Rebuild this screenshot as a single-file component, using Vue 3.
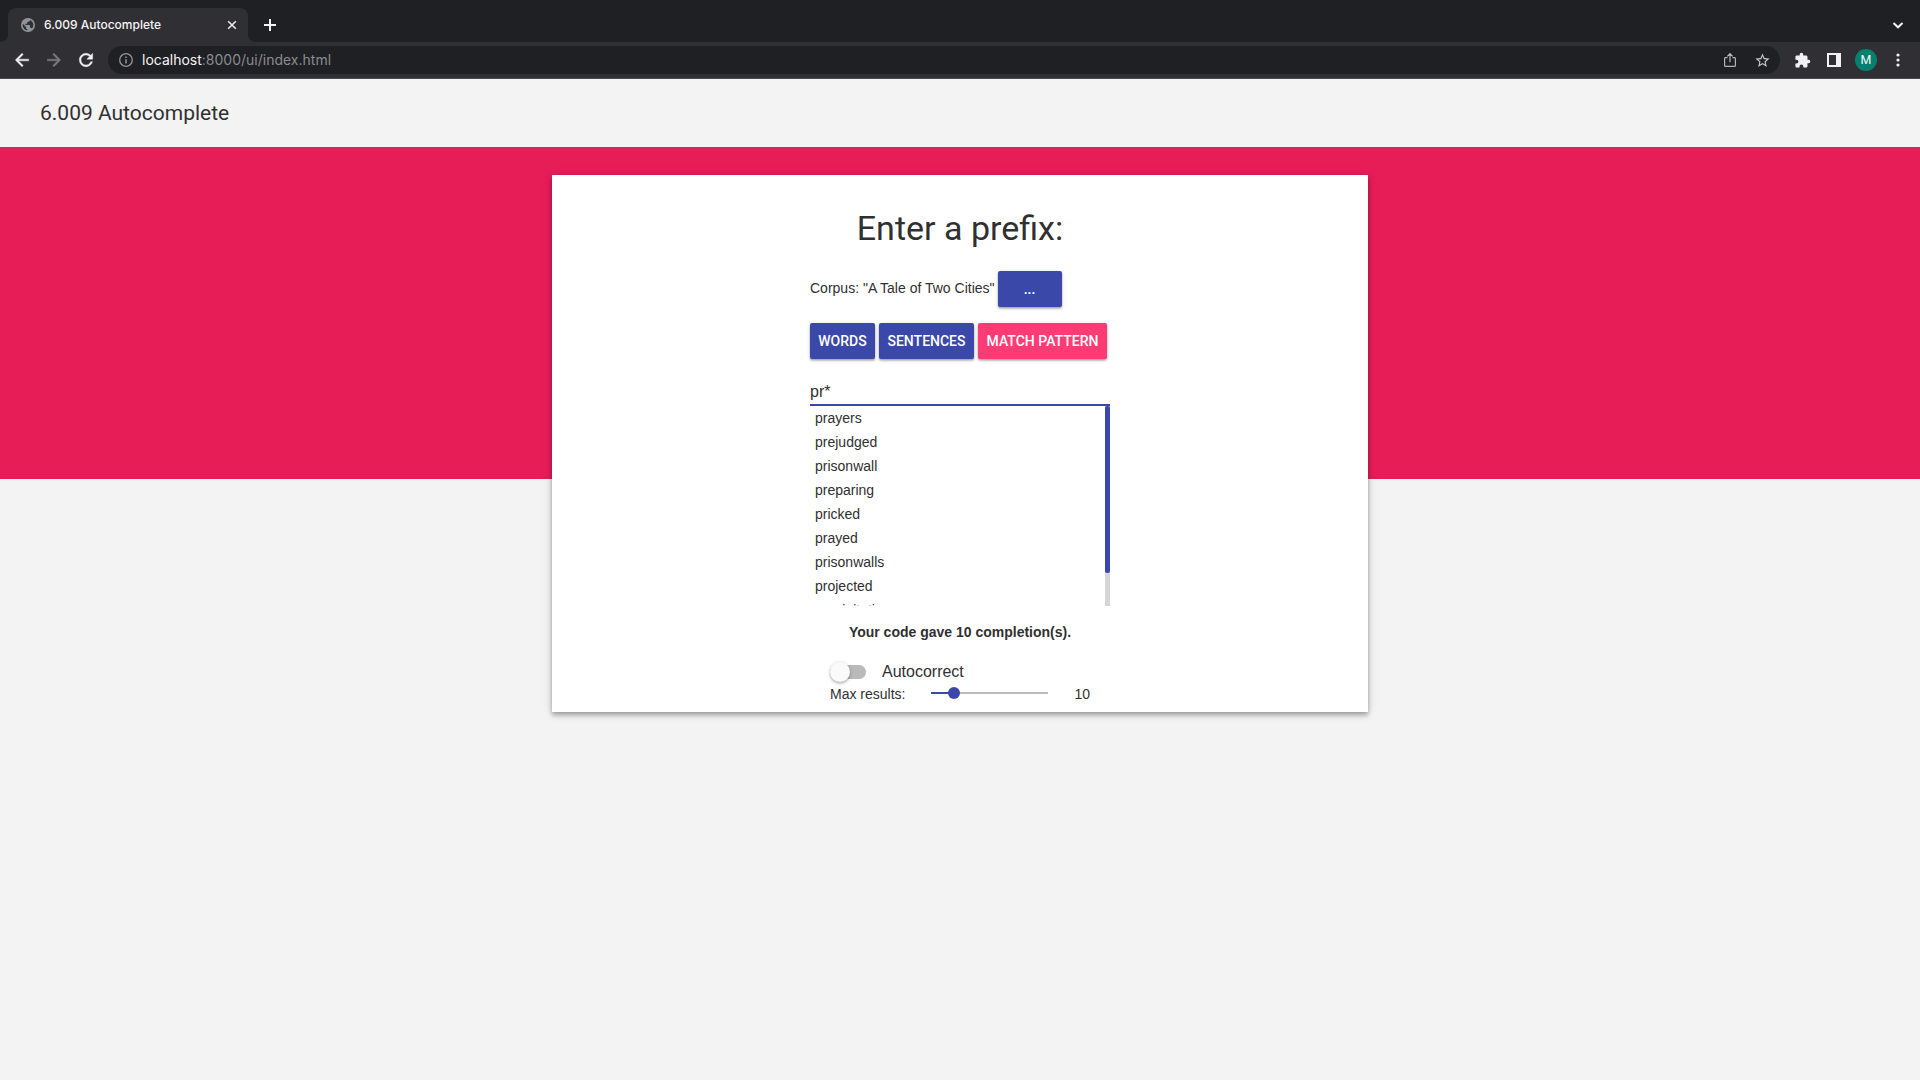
<script setup>
import { computed, ref } from 'vue'

const pattern = ref('pr*')
const autocorrect = ref(false)
const maxResults = ref(10)
const maxLimit = 50
const fill = computed(() => maxResults.value / maxLimit)
const results = [
  'prayers',
  'prejudged',
  'prisonwall',
  'preparing',
  'pricked',
  'prayed',
  'prisonwalls',
  'projected',
  'precipitation',
  'pretending',
]

// The list shows 200px of rows that are 24px tall; the thumb mirrors that ratio.
const viewHeight = 200
const contentHeight = results.length * 24
const scrollTop = ref(0)
const thumb = computed(() => ({
  height: `${Math.round((viewHeight * viewHeight) / contentHeight)}px`,
  marginTop: `${Math.round((scrollTop.value * viewHeight) / contentHeight)}px`,
}))
</script>

<template>
  <div class="window">
    <div class="tabstrip">
      <div class="tab">
        <svg class="favicon" viewBox="0 0 24 24" width="16" height="16" aria-hidden="true">
          <circle cx="12" cy="12" r="10.500" fill="#8f959b" />
          <path fill="#303034" d="M11 19.900v-1.900c-1.100 0-2-.9-2-2v-1L4.200 10.200c-.4 1.500-.3 3 .1 4.300C5.300 17.500 7.800 19.500 11 19.900zM17.900 17.400c-.3-.8-1-1.400-1.900-1.400h-1v-3c0-.6-.5-1-1-1H8v-2h2c.6 0 1-.4 1-1V7h2c1.100 0 2-.9 2-2v-.4c2.900 1.200 5 4.100 5 7.400 0 2.100-.8 4-2.100 5.400z" />
        </svg>
        <span class="tab-title">6.009 Autocomplete</span>
        <button class="icon" type="button" aria-label="Close tab">
          <svg viewBox="0 0 16 16" width="16" height="16"><path d="M4.200 4.200l7.600 7.600M11.800 4.200l-7.600 7.600" stroke="#eeeef0" stroke-width="1.500" /></svg>
        </button>
      </div>
      <button class="icon new-tab" type="button" aria-label="New tab">
        <svg viewBox="0 0 16 16" width="16" height="16"><path d="M8 2v12M2 8h12" stroke="#f4f4f5" stroke-width="2" /></svg>
      </button>
      <button class="icon tab-search" type="button" aria-label="Search tabs">
        <svg viewBox="0 0 16 16" width="16" height="16"><path d="M3.500 6L8 10.300 12.500 6" fill="none" stroke="#f4f4f5" stroke-width="2" /></svg>
      </button>
    </div>

    <div class="toolbar">
      <button class="icon" type="button" aria-label="Back">
        <svg viewBox="0 0 24 24" width="20" height="20"><path fill="#f1f1f3" stroke="#f1f1f3" stroke-width=".5" d="M20 11H7.830l5.590-5.590L12 4l-8 8 8 8 1.410-1.410L7.830 13H20v-2z" /></svg>
      </button>
      <button class="icon" type="button" aria-label="Forward">
        <svg viewBox="0 0 24 24" width="20" height="20"><path fill="#7b7b7f" stroke="#7b7b7f" stroke-width=".5" d="M12 4l-1.410 1.410L16.170 11H4v2h12.170l-5.580 5.590L12 20l8-8z" /></svg>
      </button>
      <button class="icon" type="button" aria-label="Reload">
        <svg viewBox="0 0 24 24" width="20" height="20"><path fill="#f1f1f3" stroke="#f1f1f3" stroke-width=".5" d="M17.650 6.350C16.200 4.900 14.210 4 12 4c-4.420 0-7.990 3.580-7.990 8s3.570 8 7.990 8c3.730 0 6.840-2.550 7.730-6h-2.080c-.82 2.330-3.040 4-5.650 4-3.310 0-6-2.690-6-6s2.690-6 6-6c1.660 0 3.140.69 4.220 1.780L13 11h7V4l-2.350 2.350z" /></svg>
      </button>
      <div class="omnibox">
        <svg viewBox="0 0 16 16" width="16" height="16" aria-hidden="true">
          <circle cx="8" cy="8" r="6.300" fill="none" stroke="#92979c" stroke-width="1.300" />
          <path d="M8 7.200v4.200M8 4.400v1.600" stroke="#92979c" stroke-width="1.500" />
        </svg>
        <span class="url"><b>localhost</b>:8000/ui/index.html</span>
        <button class="icon" type="button" aria-label="Share">
          <svg viewBox="0 0 16 16" width="16" height="16"><path d="M5.500 5.700H3.300a.7.7 0 0 0-.7.700v7a.9.9 0 0 0 .9.900h9a.9.9 0 0 0 .9-.9v-7a.7.7 0 0 0-.7-.7h-2.200M8 10.300V1.800M5.300 4.400L8 1.700l2.700 2.700" fill="none" stroke="#b3b3b7" stroke-width="1.200" /></svg>
        </button>
        <button class="icon" type="button" aria-label="Bookmark">
          <svg viewBox="0 0 24 24" width="17" height="17"><path fill="#c6c6c9" d="M22 9.240l-7.190-.62L12 2 9.190 8.630 2 9.240l5.460 4.730L5.820 21 12 17.270 18.180 21l-1.630-7.030L22 9.240zM12 15.400l-3.760 2.270 1-4.280-3.320-2.880 4.380-.38L12 6.100l1.710 4.040 4.380.38-3.320 2.880 1 4.280L12 15.400z" /></svg>
        </button>
      </div>
      <button class="icon" type="button" aria-label="Extensions">
        <svg viewBox="0 0 24 24" width="17" height="17"><path fill="#f1f1f3" d="M20.500 11H19V7c0-1.100-.9-2-2-2h-4V3.500a2.500 2.500 0 0 0-5 0V5H4c-1.100 0-2 .9-2 2v3.800h1.500a2.700 2.700 0 0 1 0 5.400H2V20c0 1.100.9 2 2 2h3.800v-1.500a2.700 2.700 0 0 1 5.400 0V22H17c1.100 0 2-.9 2-2v-4h1.500a2.500 2.500 0 0 0 0-5z" /></svg>
      </button>
      <button class="icon" type="button" aria-label="Side panel">
        <svg viewBox="0 0 16 16" width="16" height="16"><path fill="#f1f1f3" fill-rule="evenodd" d="M1 1h14v14H1zM3 3v10h7V3z" /></svg>
      </button>
      <button class="icon avatar" type="button" aria-label="Profile">M</button>
      <button class="icon" type="button" aria-label="Menu">
        <svg viewBox="0 0 16 16" width="16" height="16" fill="#f1f1f3"><circle cx="8" cy="3" r="1.600" /><circle cx="8" cy="8" r="1.600" /><circle cx="8" cy="13" r="1.600" /></svg>
      </button>
    </div>

    <header class="page-header">6.009 Autocomplete</header>
    <div class="ribbon"></div>

    <main class="card">
      <h1>Enter a prefix:</h1>
      <div class="column">
        <div class="corpus">
          <span>Corpus: "A Tale of Two Cities"</span>
          <button class="btn btn-more" type="button">...</button>
        </div>
        <div class="modes">
          <button class="btn" type="button">WORDS</button>
          <button class="btn" type="button">SENTENCES</button>
          <button class="btn active" type="button">MATCH PATTERN</button>
        </div>
        <input v-model="pattern" class="field" type="text" aria-label="Prefix" />
        <div class="list">
          <ul class="results" @scroll="scrollTop = $event.target.scrollTop">
            <li v-for="word in results" :key="word">{{ word }}</li>
          </ul>
          <div class="scrollbar" aria-hidden="true">
            <div class="thumb" :style="thumb"></div>
          </div>
        </div>
        <p class="summary">Your code gave {{ results.length }} completion(s).</p>
        <div class="settings">
          <label class="switch">
            <input v-model="autocorrect" type="checkbox" />
            <span>Autocorrect</span>
          </label>
          <div class="slider">
            <label for="max-results">Max results:</label>
            <input id="max-results" v-model.number="maxResults" type="range" min="0" :max="maxLimit" :style="{ '--fill': fill }" />
            <output for="max-results">{{ maxResults }}</output>
          </div>
        </div>
      </div>
    </main>
  </div>
</template>

<style>
body {
  margin: 0;
  background: #f3f3f3;
}
</style>

<style scoped>
* {
  box-sizing: border-box;
}

.window {
  min-height: 100vh;
  background: #f3f3f3;
  color: #303030;
  font: 14px/24px "Liberation Sans", Arial, sans-serif;
}

.icon {
  display: flex;
  align-items: center;
  justify-content: center;
  width: 20px;
  height: 20px;
  padding: 0;
  border: 0;
  background: none;
  flex: none;
}

.icon svg,
.omnibox svg {
  flex: none;
}

.tabstrip {
  display: flex;
  align-items: center;
  height: 42px;
  padding: 8px 12px 0 8px;
  background: #1f2023;
}

.tab {
  position: relative;
  display: flex;
  align-items: center;
  gap: 8px;
  width: 240px;
  height: 34px;
  padding: 0 6px 0 12px;
  border-radius: 8px 8px 0 0;
  background: #303034;
  color: #f4f4f5;
  font: 500 12px/16px Inter, Roboto, sans-serif;
}

.tab::before,
.tab::after {
  content: "";
  position: absolute;
  bottom: 0;
  width: 8px;
  height: 8px;
}

.tab::before {
  right: 100%;
  background: radial-gradient(circle at 0 0, transparent 8px, #303034 8px);
}

.tab::after {
  left: 100%;
  background: radial-gradient(circle at 100% 0, transparent 8px, #303034 8px);
}

.tab-title {
  flex: 1;
}

.new-tab {
  margin-left: 12px;
}

.tab-search {
  margin-left: auto;
}

.toolbar {
  display: flex;
  align-items: center;
  gap: 12px;
  height: 37px;
  padding: 0 12px;
  border-bottom: 1px solid #4b4b4f;
  background: #303034;
}

.omnibox {
  display: flex;
  flex: 1;
  align-items: center;
  gap: 12px;
  height: 28px;
  padding: 0 8px 0 10px;
  border-radius: 14px;
  background: #1f2023;
}

.url {
  flex: 1;
  margin-left: -4px;
  color: #8b8b8f;
  font: 14px/20px Inter, Roboto, sans-serif;
}

.url b {
  color: #f4f4f5;
  font-weight: 400;
}

.avatar {
  width: 22px;
  height: 22px;
  margin: 0 -1px;
  border-radius: 50%;
  background: #04806f;
  color: #fff;
  font: 12px/22px Inter, Roboto, sans-serif;
}

.page-header {
  padding: 20px 40px;
  font: 400 21px/28px Roboto, sans-serif;
}

.ribbon {
  height: 332px;
  background: #e71d58;
}

.card {
  position: relative;
  width: 42.5%;
  margin: -304px auto 0;
  padding: 33px 0 8px;
  background: #fff;
  box-shadow: 0 4px 5px rgba(0, 0, 0, 0.14), 0 1px 10px rgba(0, 0, 0, 0.12), 0 2px 4px rgba(0, 0, 0, 0.2);
}

h1 {
  margin: 0 0 23px;
  font: 400 34px/40px Roboto, sans-serif;
  text-align: center;
}

.column {
  width: 300px;
  margin: 0 auto;
}

.corpus {
  display: flex;
  gap: 3px;
  line-height: 34px;
  white-space: nowrap;
}

.modes {
  display: grid;
  grid-template-columns: 65px 95px 129px;
  gap: 4px;
  margin-top: 16px;
}

.btn {
  height: 36px;
  padding: 0;
  border: 0;
  border-radius: 2px;
  background: #3a48aa;
  color: #fff;
  font: 500 14px/36px Roboto, sans-serif;
  white-space: nowrap;
  box-shadow: 0 2px 2px rgba(0, 0, 0, 0.14), 0 1px 5px rgba(0, 0, 0, 0.12), 0 1px 2px rgba(0, 0, 0, 0.2);
}

.btn-more {
  width: 64px;
}

.btn.active {
  background: #ff3b76;
}

.field {
  display: block;
  width: 100%;
  height: 27px;
  margin-top: 20px;
  padding: 0;
  border: 0;
  border-bottom: 2px solid #3a48aa;
  outline: 0;
  background: none;
  color: inherit;
  font: 16px/24px "Liberation Sans", Arial, sans-serif;
}

.list {
  display: flex;
  height: 200px;
}

.results {
  flex: 1;
  margin: 0;
  padding: 0;
  overflow-y: auto;
  list-style: none;
  scrollbar-width: none;
}

.results li {
  padding-left: 5px;
}

.scrollbar {
  width: 5px;
  background: #d5d5d5;
}

.thumb {
  border-radius: 2px;
  background: #3a48aa;
}

.summary {
  margin: 14px 0 16px;
  font-weight: 700;
  text-align: center;
}

.settings {
  padding: 0 20px;
}

.switch {
  display: flex;
  align-items: center;
  gap: 16px;
  font-size: 16px;
}

.switch input {
  position: relative;
  width: 36px;
  height: 14px;
  margin: 0;
  border-radius: 7px;
  appearance: none;
  background: #bababa;
}

.switch input::before {
  content: "";
  position: absolute;
  top: -3px;
  left: 0;
  width: 20px;
  height: 20px;
  border-radius: 50%;
  background: #fafafa;
  box-shadow: 0 2px 2px rgba(0, 0, 0, 0.14), 0 1px 4px rgba(0, 0, 0, 0.2);
}

.switch input:checked::before {
  left: 16px;
  background: #3a48aa;
}

.slider {
  display: flex;
  height: 20px;
  line-height: 20px;
}

.slider label {
  width: 95px;
}

.slider input {
  flex: 1;
  min-width: 0;
  height: 18px;
  margin: 0;
  appearance: none;
  background:
    linear-gradient(#3a48aa, #3a48aa) 6px center / calc((100% - 12px) * var(--fill)) 2px no-repeat,
    linear-gradient(#bababa, #bababa) center / calc(100% - 12px) 2px no-repeat;
}

.slider input::-webkit-slider-thumb {
  width: 12px;
  height: 12px;
  border-radius: 50%;
  appearance: none;
  background: #3a48aa;
}

.slider output {
  width: 36px;
  text-align: right;
}
</style>
